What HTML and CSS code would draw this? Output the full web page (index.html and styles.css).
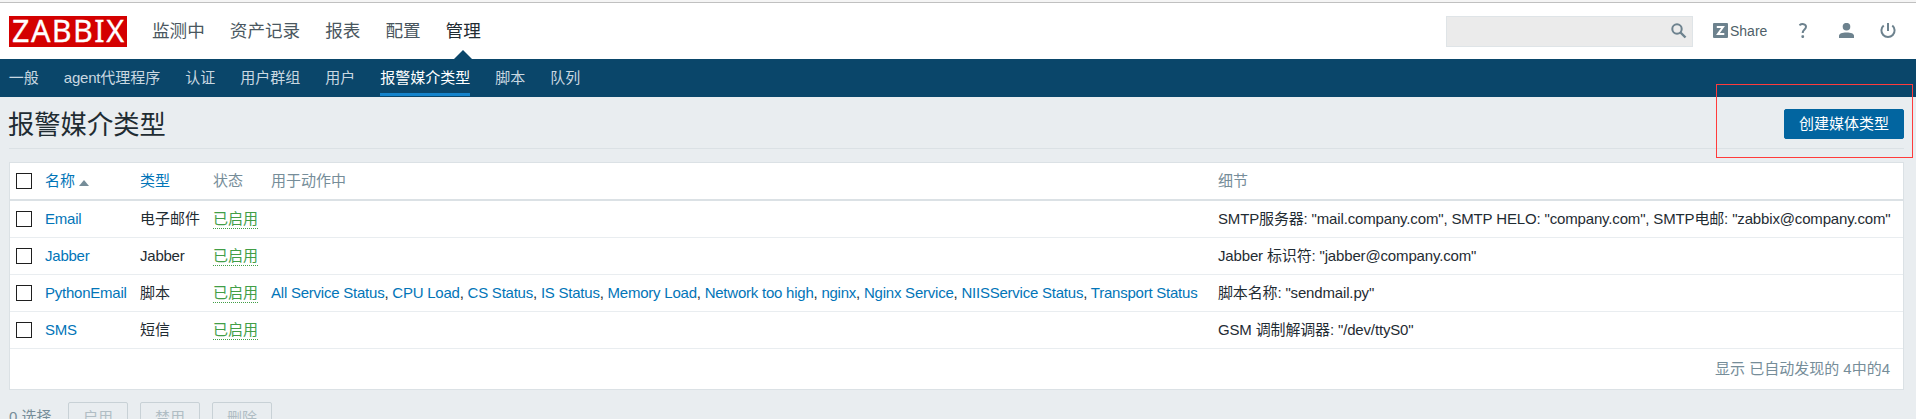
FILE: index.html
```html
<!DOCTYPE html>
<html lang="zh-CN">
<head>
<meta charset="utf-8">
<title>报警媒介类型</title>
<link rel="stylesheet" href="styles.css">
</head>
<body>
<header class="top">
  <svg class="logo" width="118" height="31" viewBox="0 0 118 31"><rect width="118" height="31" fill="#d40000"/><text x="3" y="26.3" textLength="112" lengthAdjust="spacing" class="logo-text">ZABBIX</text></svg>
  <nav class="main-nav"><a>监测中</a><a>资产记录</a><a>报表</a><a>配置</a><a class="selected">管理</a></nav>
  <div class="search"><svg width="16" height="16" viewBox="0 0 16 16" fill="none" stroke="#6d828e"><circle cx="6" cy="6" r="4.7" stroke-width="2"/><path d="M9.5 9.5L14.5 14.5" stroke-width="2.4"/></svg></div>
  <a class="share"><svg width="15" height="15" viewBox="0 0 15 15"><rect width="15" height="15" rx="1" fill="#6d828e"/><path d="M3.8 4H10L5 11H11.3" fill="none" stroke="#fff" stroke-width="2"/></svg>Share</a>
  <svg class="help" width="10" height="15" viewBox="0 0 10 15"><path d="M1.4 2.2C3.8.5 8 .6 8 3.8C8 6.6 4.7 6.4 4.7 10" fill="none" stroke="#6d828e" stroke-width="2"/><rect x="3.4" y="12.2" width="2.7" height="2.7" rx=".8" fill="#6d828e"/></svg>
  <svg class="user" width="15" height="15" viewBox="0 0 15 15" fill="#6d828e"><circle cx="7.5" cy="3.7" r="3.8"/><path d="M0 15V13C0 10.7 3 9.6 7.5 9.6S15 10.7 15 13V15Z"/></svg>
  <svg class="power" width="16" height="16" viewBox="0 0 16 16" fill="none" stroke="#6d828e" stroke-width="2"><path d="M8 0V8M3.7 2.5A6.6 6.6 0 1 0 12.3 2.5"/></svg>
</header>
<nav class="sub-nav"><a>一般</a><a><span class="latin">agent</span>代理程序</a><a>认证</a><a>用户群组</a><a>用户</a><a class="selected">报警媒介类型</a><a>脚本</a><a>队列</a></nav>
<main>
  <div class="title-row"><h1>报警媒介类型</h1><button class="create">创建媒体类型</button></div>
  <table>
    <colgroup><col class="c-check"><col class="c-name"><col class="c-type"><col class="c-status"><col class="c-actions"><col></colgroup>
    <thead><tr><th><span class="box"></span></th><th><a>名称<span class="arrow"></span></a></th><th><a>类型</a></th><th>状态</th><th>用于动作中</th><th>细节</th></tr></thead>
    <tbody>
      <tr><td><span class="box"></span></td><td class="latin"><a>Email</a></td><td>电子邮件</td><td><span class="on">已启用</span></td><td></td><td class="details">SMTP服务器: "mail.company.com", SMTP HELO: "company.com", SMTP电邮: "zabbix@company.com"</td></tr>
      <tr><td><span class="box"></span></td><td class="latin"><a>Jabber</a></td><td class="latin">Jabber</td><td><span class="on">已启用</span></td><td></td><td class="details">Jabber 标识符: "jabber@company.com"</td></tr>
      <tr><td><span class="box"></span></td><td class="latin"><a>PythonEmail</a></td><td>脚本</td><td><span class="on">已启用</span></td><td class="latin"><a>All Service Status</a>, <a>CPU Load</a>, <a>CS Status</a>, <a>IS Status</a>, <a>Memory Load</a>, <a>Network too high</a>, <a>nginx</a>, <a>Nginx Service</a>, <a>NIISService Status</a>, <a>Transport Status</a></td><td class="details">脚本名称: "sendmail.py"</td></tr>
      <tr><td><span class="box"></span></td><td class="latin"><a>SMS</a></td><td>短信</td><td><span class="on">已启用</span></td><td></td><td class="details">GSM 调制解调器: "/dev/ttyS0"</td></tr>
    </tbody>
    <tfoot><tr><td colspan="6">显示 已自动发现的 4中的4</td></tr></tfoot>
  </table>
  <div class="actions"><span class="count">0 选择</span><button disabled>启用</button><button disabled>禁用</button><button disabled>删除</button></div>
</main>
<div class="highlight"></div>
</body>
</html>
```
FILE: styles.css
```css
* { box-sizing: border-box; }
html, body { height: 419px; overflow: hidden; }
body { margin: 0; background: #e9edf0; color: #1f2c33; font: 15px/20px "Liberation Sans", "Noto Sans CJK SC", sans-serif; position: relative; }
.top { height: 59px; background: #fff; border-top: 2px solid #f5f5f5; box-shadow: inset 0 1px #c0c0c0; display: flex; align-items: flex-start; padding: 14px 20px 0 9px; }
.logo { display: block; flex: none; }
.logo-text { font-family: "Noto Sans", "Open Sans", sans-serif; font-size: 30.5px; fill: #fff; stroke: #fff; stroke-width: .3px; }
.main-nav { display: flex; gap: 25px; margin-left: 25px; font-size: 17.6px; line-height: 30px; color: #4a5760; }
.main-nav .selected { color: #1f2c33; position: relative; }
.main-nav .selected::after { content: ""; position: absolute; left: 8px; top: 34px; border: 9px solid transparent; border-top: 0; border-bottom-color: #0a466a; }
.search { width: 247px; height: 31px; margin-left: auto; background: #ebebeb; border: 1px solid #dfe4e7; padding: 6px 0 0 224px; }
.search svg, .share svg { display: block; }
.share { display: flex; gap: 2px; margin: 7px 0 0 20px; font-size: 14px; line-height: 17px; color: #4f5f69; width: 56px; }
.help { margin: 7px 0 0 29px; }
.user { margin: 7px 0 0 31px; }
.power { margin: 7px 0 0 26px; }
.sub-nav { height: 38px; background: #0a466a; color: #c9d8e1; display: flex; gap: 25px; padding-left: 8.8px; line-height: 37px; }
.sub-nav a { height: 37px; }
.sub-nav .selected { color: #fff; border-bottom: 3px solid #1483cb; }
.latin { letter-spacing: -0.23px; }
.details { letter-spacing: -0.155px; }
main { padding: 0 12px 0 9px; }
.title-row { height: 52px; border-bottom: 1px solid #dbe1e5; display: flex; justify-content: space-between; padding-top: 12px; }
h1 { margin: 0 0 0 -1px; font-size: 26.3px; font-weight: 400; line-height: 33px; }
button { font: inherit; height: 30px; padding: 0; border-radius: 2px; border: 1px solid #0265a0; }
.create { width: 120px; background: #0265a0; color: #fff; }
table { width: 1895px; height: 228px; margin-top: 13px; background: #fff; border: 1px solid #dbe1e5; table-layout: fixed; border-spacing: 0; }
.c-check { width: 30px; }
.c-name { width: 95px; }
.c-type { width: 73px; }
.c-status { width: 58px; }
.c-actions { width: 947px; }
th, td { height: 37px; padding: 0 0 0 5px; text-align: left; font-weight: 400; white-space: nowrap; border-bottom: 1px solid #e9edf0; line-height: 20px; }
th:first-child, td:first-child { padding-left: 6px; }
th { height: 38px; color: #768d99; border-bottom: 2px solid #dbe1e5; }
td a, th a { color: #0275b8; }
tfoot td { height: 40px; border: 0; text-align: right; color: #768d99; padding-right: 13px; }
.box { display: block; width: 16px; height: 16px; border: 1px solid #1f1f1f; background: #fff; }
.arrow { display: inline-block; margin-left: 4px; border: 5px solid transparent; border-top: 0; border-bottom: 6px solid #768d99; }
.on { display: inline-block; color: #429e47; border-bottom: 1px dotted #429e47; line-height: 19px; }
.actions { display: flex; gap: 12px; margin-top: 12px; color: #768d99; line-height: 30px; }
.count { width: 47px; }
.actions button { width: 60px; background: transparent; border-color: #c8d1d6; color: #b0bdc4; }
.highlight { position: absolute; left: 1716px; top: 84px; width: 197px; height: 74px; border: 1px solid #ff3b3b; }
```
